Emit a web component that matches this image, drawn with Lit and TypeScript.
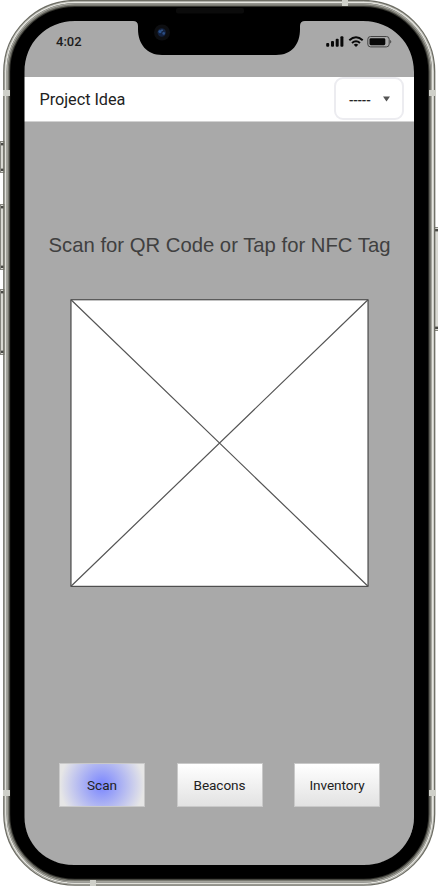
import { LitElement, html, css, svg } from "lit";
import { customElement, property } from "lit/decorators.js";

@customElement("phone-frame")
class PhoneFrame extends LitElement {
  static styles = css`
    :host { position: absolute; inset: 0; pointer-events: none; }
    svg { display: block; }
  `;

  ring(inset: number, color: string, width = 1) {
    return svg`<rect x=${3 + inset} y=${inset - 0.3} width=${432.5 - inset * 2} height=${886.3 - inset * 2}
      rx=${72 - inset} fill="none" stroke=${color} stroke-width=${width} />`;
  }

  sideButton(x: number, y: number, h: number) {
    return svg`
      <rect x=${x + 0.5} y=${y + 0.5} width="4" height=${h - 1} fill="#d9d9d3" stroke="#85857e" />
      <rect x=${x + 1} y=${y + 2} width="3" height="2.4" fill="#4b4b47" />
      <rect x=${x + 1} y=${y + h - 4.4} width="3" height="2.4" fill="#4b4b47" />`;
  }

  render() {
    return html`<svg width="438" height="886" viewBox="0 0 438 886">
      ${this.sideButton(0, 141, 32)}
      ${this.sideButton(0, 204, 66)}
      ${this.sideButton(0, 289, 66)}
      ${this.sideButton(434, 227, 104)}
      <path fill-rule="evenodd" fill="#000"
        d="M74 2H364C402 2 433 33 433 71V815C433 853 402 884 364 884H74C36 884 6 853 6 815V71C6 33 36 2 74 2Z
           M75 21C46 21 24.5 43 24.5 72V817C24.5 844 46 865 74 865H364C392 865 414 844 414 817V72C414 43 392 21 363 21H305Q300 21 300 26V29C300 44 292 55 276 55H162C147 55 138 44 138 29V26Q138 21 133 21Z" />
      ${this.ring(6.6, "#34342f", 1.2)}
      ${this.ring(5.5, "#77776f", 1.4)}
      ${this.ring(4.2, "#a3a39b", 1.5)}
      ${this.ring(2.7, "#e5e5df", 1.7)}
      ${this.ring(1.6, "#aeaea7", 0.8)}
      ${this.ring(0.8, "#6d6d64", 1.3)}
      <g fill="#cfd0c9">
        <rect x="3" y="90" width="7" height="6" />
        <rect x="429" y="90" width="7" height="6" />
        <rect x="3" y="790" width="7" height="6" />
        <rect x="429" y="790" width="7" height="6" />
        <rect x="342" y="0" width="6" height="6" />
        <rect x="90" y="880" width="6" height="6" />
      </g>
      <rect x="176" y="8" width="68" height="5.5" rx="2" fill="#0b0b0b" />
      <circle cx="162" cy="32.5" r="8" fill="#0d0e11" />
      <circle cx="161.7" cy="32.5" r="4.2" fill="#142240" />
      <circle cx="160" cy="31.6" r="1.6" fill="#28518a" />
      <circle cx="163.7" cy="33.4" r="1.3" fill="#2c4f86" />
      <circle cx="162" cy="30.3" r="0.8" fill="#426ba0" />
    </svg>`;
  }
}

@customElement("status-bar")
class StatusBar extends LitElement {
  static styles = css`
    :host {
      display: flex; justify-content: space-between; align-items: flex-start;
      height: 56px; box-sizing: border-box; padding: 13px 22px 0 32px;
    }
    .time { font: 500 13px/16px Roboto, sans-serif; color: #1c1c1c; }
    svg { display: block; }
  `;
  render() {
    return html`
      <span class="time">4:02</span>
      <svg width="66" height="16" viewBox="326 34 66 16">
        <g fill="#080808">
          <rect x="326.2" y="43" width="3" height="3.8" rx="1" />
          <rect x="331" y="41" width="3" height="5.8" rx="1" />
          <rect x="335.7" y="38.7" width="3" height="8.1" rx="1" />
          <rect x="340.4" y="36.2" width="3" height="10.6" rx="1" />
        </g>
        <g fill="none" stroke="#080808" stroke-width="2">
          <path d="M349.3 40.2Q356 34.2 362.7 40.2" />
          <path d="M352 43Q356 39.6 360 43" />
        </g>
        <path d="M353.7 44.7Q356 43 358.3 44.7L356 47Z" fill="#080808" />
        <rect x="367.8" y="36.5" width="21.4" height="10.4" rx="2.8" fill="none" stroke="#444" />
        <rect x="369.5" y="38.2" width="15.8" height="7" rx="1.4" fill="#080808" />
        <path d="M390.2 39.8Q392.4 41.7 390.2 43.6Z" fill="#444" />
      </svg>`;
  }
}

@customElement("nav-button")
class NavButton extends LitElement {
  @property({ type: Boolean }) active = false;
  static styles = css`
    :host { display: block; }
    button {
      display: block; width: 86px; height: 44px; padding: 0 1px 1px; box-sizing: border-box;
      border: 1px solid #c9c9c9; border-radius: 0; color: #222;
      background: linear-gradient(#fff, #e2e2e2);
      font: 400 13.6px Roboto, sans-serif; letter-spacing: -0.06px;
    }
    .active { background: radial-gradient(circle at 50% 50%, #7985ff 0, #e6e6e6 42px); }
  `;
  render() {
    return html`<button class=${this.active ? "active" : ""}><slot></slot></button>`;
  }
}

@customElement("app-root")
class AppRoot extends LitElement {
  static styles = css`
    :host { display: block; position: relative; width: 438px; height: 886px; background: #fff; overflow: hidden; }
    .screen {
      display: flex; flex-direction: column; box-sizing: border-box;
      width: 390px; height: 844px; margin: 21px 0 0 24px;
      background: #a9a9a9; border-radius: 48px; overflow: hidden;
    }
    .wrap { display: flow-root; }
    header {
      display: flex; align-items: center; justify-content: space-between; flex: none;
      height: 44.5px; box-sizing: border-box; padding: 0 10px 0 15.5px;
      background: #fff; border-bottom: 1px solid #d2d2d2;
    }
    .title { font: 400 16.3px/20px Roboto, sans-serif; color: #222; padding-top: 2px; letter-spacing: -0.05px; }
    .select {
      display: flex; align-items: center; justify-content: space-between;
      width: 70px; height: 43px; box-sizing: border-box; padding: 1px 12px 0 13px;
      border: 2px solid #ececf0; border-radius: 9px; background: #fff;
      font: 400 13.33px "Liberation Sans", sans-serif; color: #222;
    }
    .dash { letter-spacing: -0.15px; -webkit-text-stroke: 0.2px #222; }
    h1 {
      margin: 110px 0 0; padding-left: 1px; text-align: center; white-space: nowrap; color: #404040;
      font: 400 20.3px/26px "Liberation Sans", sans-serif; letter-spacing: 0;
    }
    .placeholder { display: block; margin: 41px 0 0 46px; flex: none; }
    nav { display: flex; gap: 31.5px; margin: 175.5px 0 0 35px; }
  `;
  render() {
    return html`
      <div class="wrap">
        <div class="screen">
          <status-bar></status-bar>
          <header>
            <span class="title">Project Idea</span>
            <div class="select">
              <span class="dash">-----</span>
              <svg width="7" height="6" viewBox="0 0 7 6"><path d="M0 0.5H7L3.5 5.5Z" fill="#555" /></svg>
            </div>
          </header>
          <h1>Scan for QR Code or Tap for NFC Tag</h1>
          <svg class="placeholder" width="299" height="289" viewBox="0 0 299 289">
            <rect x="1" y="0.8" width="297" height="286.5" fill="#fff" stroke="#333" />
            <path d="M1 0.8L298 287.3M298 0.8L1 287.3" stroke="#555" stroke-width="1.2" fill="none" />
          </svg>
          <nav>
            <nav-button active>Scan</nav-button>
            <nav-button>Beacons</nav-button>
            <nav-button>Inventory</nav-button>
          </nav>
        </div>
      </div>
      <phone-frame></phone-frame>`;
  }
}
